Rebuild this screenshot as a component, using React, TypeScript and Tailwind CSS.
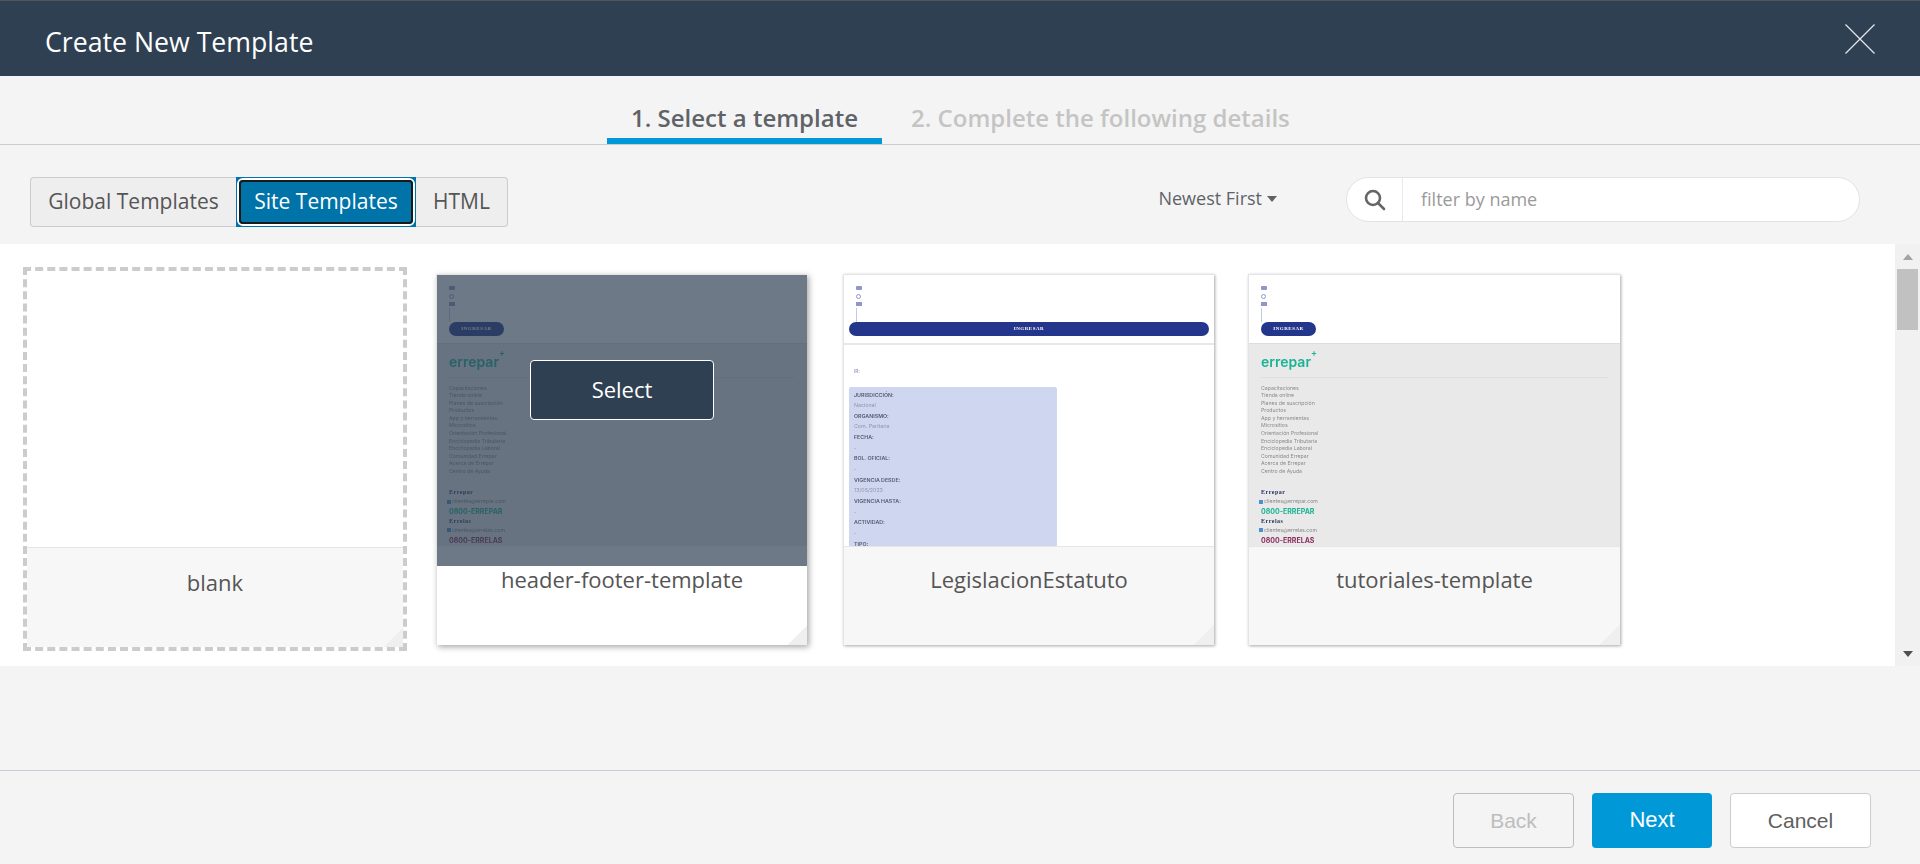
const menu = [
  "Capacitaciones",
  "Tienda online",
  "Planes de suscripción",
  "Productos",
  "App y herramientas",
  "Micrositios",
  "Orientación Profesional",
  "Enciclopedia Tributaria",
  "Enciclopedia Laboral",
  "Comunidad Errepar",
  "Acerca de Errepar",
  "Centro de Ayuda",
];

const fields = [
  ["JURISDICCIÓN:", true],
  ["Nacional", false],
  ["ORGANISMO:", true],
  ["Com. Paritaria", false],
  ["FECHA:", true],
  ["-", false],
  ["BOL. OFICIAL:", true],
  ["-", false],
  ["VIGENCIA DESDE:", true],
  ["13/05/2023", false],
  ["VIGENCIA HASTA:", true],
  ["-", false],
  ["ACTIVIDAD:", true],
  ["-", false],
  ["TIPO:", true],
] as const;

function ThumbHeader({ wide }: { wide?: boolean }) {
  return (
    <div className="h-[68px] shrink-0 pl-[12px] pt-[11px] flex flex-col items-start">
      <div className="w-[6px] h-[4px] bg-[#8f97c8] rounded-[1px] blur-[0.4px]" />
      <div className="mt-[4px] w-[5px] h-[5px] border border-[#8f97c8] rounded-full blur-[0.4px]" />
      <div className="mt-[3px] w-[6px] h-[4px] bg-[#8f97c8] blur-[0.4px]" />
      <div className="mt-[2px] w-px h-[14px] bg-[#c5cae6]" />
      <div
        className={`${wide ? "w-[360px] -ml-[7px]" : "w-[55px]"} h-[14px] rounded-full bg-[#23368c] text-white text-[5px] leading-[14px] tracking-[0.5px] font-bold text-center blur-[0.4px] font-['Liberation_Serif',serif]`}
      >
        INGRESAR
      </div>
    </div>
  );
}

function FooterThumb() {
  return (
    <div className="flex-1 min-h-0 overflow-hidden bg-[#e9e9e9] border-t border-[#dddddd] px-[12px] pt-[9px] font-['Inter',sans-serif]">
      <div className="h-[25px] border-b border-[#dedede] text-[#1bb394] text-[14px] leading-[17px] font-semibold">
        <span className="blur-[0.4px] inline-block">
          errepar<sup className="text-[9px] align-top leading-[10px]">+</sup>
        </span>
      </div>
      <div className="mt-[7px] flex flex-col text-[#8a8a8a] text-[5.2px] leading-[7.58px] blur-[0.6px]">
        {menu.map((m) => (
          <span key={m}>{m}</span>
        ))}
      </div>
      <div className="mt-[13px] text-[#27305e] text-[6px] leading-[9px] font-bold tracking-[0.5px] font-['Liberation_Serif',serif] blur-[0.5px]">
        Errepar
      </div>
      <div className="flex items-center text-[#888888] text-[5.2px] leading-[9px] -ml-[2px] blur-[0.6px]">
        <span className="w-[4px] h-[4px] bg-[#4a90d0] mr-[1px]" />
        clientes@errepar.com
      </div>
      <div className="text-[#1bb394] text-[7px] leading-[11px] font-bold blur-[0.6px]">0800-ERREPAR</div>
      <div className="text-[#27305e] text-[6px] leading-[8px] font-bold tracking-[0.5px] font-['Liberation_Serif',serif] blur-[0.5px]">
        Errelas
      </div>
      <div className="flex items-center text-[#888888] text-[5.2px] leading-[10px] -ml-[2px] blur-[0.6px]">
        <span className="w-[4px] h-[4px] bg-[#4a90d0] mr-[1px]" />
        clientes@errelas.com
      </div>
      <div className="text-[#8c2f63] text-[7px] leading-[11px] font-bold blur-[0.6px]">0800-ERRELAS</div>
    </div>
  );
}

function LegislacionThumb() {
  return (
    <div className="flex-1 min-h-0 overflow-hidden bg-white border-t-2 border-[#e8e8e8] pl-[5px] font-['Inter',sans-serif]">
      <div className="pl-[5px] pt-[23px] h-[42px] text-[#7f88bd] text-[5px] leading-[7px] blur-[0.4px]">IR:</div>
      <div className="w-[208px] h-[180px] bg-[#cfd6ef] rounded-t-[2px] pl-[5px] pt-[3px] flex flex-col">
        {fields.map(([label, strong], i) => (
          <span
            key={i}
            className={`text-[5.3px] leading-[10.65px] blur-[0.6px] ${strong ? "text-[#555a6e] font-semibold" : "text-[#8f95ad]"}`}
          >
            {label}
          </span>
        ))}
      </div>
    </div>
  );
}

function TemplateCard({
  name,
  className,
  hovered,
  children,
}: {
  name: string;
  className: string;
  hovered?: boolean;
  children: React.ReactNode;
}) {
  return (
    <div
      className={`relative h-[371px] shrink-0 flex flex-col bg-white border-t border-l border-[#e4e4e4] ${
        hovered ? "shadow-[2px_2px_6px_rgba(0,0,0,0.35)]" : "shadow-[1px_1px_3px_rgba(0,0,0,0.35)]"
      } ${className}`}
    >
      <div className="h-[271px] shrink-0 flex flex-col overflow-hidden">{children}</div>
      <div
        className={`flex-1 text-center text-[22px] leading-[28px] text-[#555555] ${
          hovered ? "pt-[19px] bg-white" : "pt-[18px] border-t border-[#e6e6e6] bg-[#f7f7f7]"
        }`}
      >
        {name}
      </div>
      <div className="absolute right-0 bottom-0 w-[20px] h-[20px] bg-[linear-gradient(135deg,transparent_50%,#efefef_50%)]" />
      {hovered && (
        <div className="absolute left-0 right-0 top-0 h-[291px] bg-[#2f4052]/70 flex items-start justify-center pt-[85px]">
          <button className="w-[184px] h-[60px] bg-[#2f4052] border border-white rounded-[4px] text-white text-[22px]">
            Select
          </button>
        </div>
      )}
    </div>
  );
}

export default function App() {
  return (
    <div className="h-screen w-full flex flex-col overflow-hidden bg-[#f4f4f4] font-['Open_Sans',sans-serif]">
      {/* Header */}
      <header className="h-[76px] shrink-0 bg-[#2f4052] border-t border-[#555555] flex items-center justify-between pl-[45px] pr-[45px]">
        <h1 className="text-[26.7px] text-white pt-[7px]">Create New Template</h1>
        <button className="text-white">
          <svg width="30" height="30" viewBox="0 0 30 30" fill="none" stroke="#e6e9ec" strokeWidth="1.2">
            <path d="M0.5 0.5L29.5 29.5M29.5 0.5L0.5 29.5" />
          </svg>
        </button>
      </header>

      {/* Steps */}
      <div className="h-[69px] shrink-0 border-b border-[#cccccc] flex pl-[607px]">
        <div className="w-[275px] h-[68px] border-b-[6px] border-[#0098d7] text-center text-[24px] leading-[30px] pt-[27px] font-semibold text-[#5f6368]">
          1. Select a template
        </div>
        <div className="ml-[29px] h-[68px] text-[24px] leading-[30px] pt-[27px] font-semibold text-[#c4c4c4]">
          2. Complete the following details
        </div>
      </div>

      {/* Toolbar */}
      <div className="h-[99px] shrink-0 flex items-start pl-[30px] pr-[60px] pt-[32px]">
        <div className="flex h-[50px] text-[21px] text-[#555555]">
          <button className="w-[206px] bg-[#eeeeee] border border-[#cccccc] border-r-0 rounded-l-[4px]">
            Global Templates
          </button>
          <button className="w-[180px] bg-[#0073a8] border border-[#0073a8] text-white">
            <span className="block h-full border-2 border-white rounded-[6px]">
              <span className="h-full flex items-center justify-center border-2 border-[#1a1a1a] rounded-[4px]">
                Site Templates
              </span>
            </span>
          </button>
          <button className="w-[92px] bg-[#eeeeee] border border-[#cccccc] border-l-0 rounded-r-[4px]">HTML</button>
        </div>
        <div className="ml-auto h-[42px] flex items-center text-[18px] text-[#5f6368] pr-[69px]">
          Newest First
          <span className="ml-[5px] mt-[2px] w-0 h-0 border-l-[5.5px] border-r-[5.5px] border-t-[6px] border-l-transparent border-r-transparent border-t-[#5f6368]" />
        </div>
        <div className="w-[514px] h-[45px] flex items-center bg-white border border-[#e3e3e3] rounded-full">
          <div className="w-[56px] h-full flex items-center justify-center border-r border-[#e9e9e9]">
            <svg width="22" height="22" viewBox="0 0 22 22" fill="none" stroke="#666666">
              <circle cx="9" cy="9" r="7" strokeWidth="2.6" />
              <path d="M14 14L20 20" strokeWidth="2.6" strokeLinecap="round" />
            </svg>
          </div>
          <input
            placeholder="filter by name"
            className="flex-1 h-full pl-[18px] pb-[2px] bg-transparent outline-none rounded-r-full text-[18px] placeholder:text-[#9a9a9a]"
          />
        </div>
      </div>

      {/* Template list */}
      <div className="h-[422px] shrink-0 flex bg-white">
        <div className="flex-1 flex items-center pl-[23px] pt-[8px] overflow-hidden">
          <div className="relative w-[384px] h-[384px] shrink-0 flex flex-col border-[4px] border-dashed border-[#cccccc] bg-white">
            <div className="h-[277px] shrink-0 border-b border-[#e6e6ea]" />
            <div className="flex-1 bg-[#f7f7f7] text-center text-[22px] leading-[28px] pt-[20px] text-[#555555]">
              blank
            </div>
            <div className="absolute right-0 bottom-0 w-[20px] h-[20px] bg-[linear-gradient(135deg,transparent_50%,#efefef_50%)]" />
          </div>
          <TemplateCard name="header-footer-template" className="ml-[29px] w-[371px]" hovered>
            <ThumbHeader />
            <FooterThumb />
          </TemplateCard>
          <TemplateCard name="LegislacionEstatuto" className="ml-[36px] w-[371px]">
            <ThumbHeader wide />
            <LegislacionThumb />
          </TemplateCard>
          <TemplateCard name="tutoriales-template" className="ml-[34px] w-[372px]">
            <ThumbHeader />
            <FooterThumb />
          </TemplateCard>
        </div>
        {/* Scrollbar */}
        <div className="w-[25px] shrink-0 flex flex-col items-center bg-[#f1f1f1]">
          <div className="h-[25px] w-full flex items-center justify-center">
            <span className="w-0 h-0 border-l-[5px] border-r-[5px] border-b-[6px] border-l-transparent border-r-transparent border-b-[#a3a3a3]" />
          </div>
          <div className="w-[21px] h-[61px] bg-[#c1c1c1]" />
          <div className="flex-1" />
          <div className="h-[25px] w-full flex items-center justify-center">
            <span className="w-0 h-0 border-l-[5px] border-r-[5px] border-t-[6px] border-l-transparent border-r-transparent border-t-[#505050]" />
          </div>
        </div>
      </div>

      {/* Footer */}
      <div className="flex-1" />
      <footer className="h-[94px] shrink-0 border-t border-[#c9ced6] flex items-start justify-end gap-[18px] pt-[22px] pr-[49px] text-[21px] font-['Liberation_Sans',sans-serif]">
        <button className="w-[121px] h-[55px] border border-[#bdbdbd] rounded-[4px] text-[#bdbdbd]">Back</button>
        <button className="w-[120px] h-[55px] pb-[2px] bg-[#0098d7] rounded-[4px] text-white text-[22px]">Next</button>
        <button className="w-[141px] h-[55px] bg-white border border-[#cccccc] rounded-[4px] text-[#5f5f5f]">
          Cancel
        </button>
      </footer>
    </div>
  );
}
